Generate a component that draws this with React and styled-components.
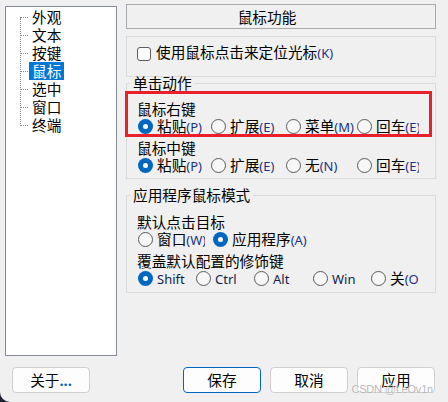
import React from 'react';
import styled, { createGlobalStyle } from 'styled-components';

const GlobalStyle = createGlobalStyle`
  html, body {
    margin: 0;
    padding: 0;
    background: #1f2330;
  }
  body {
    font-family: "Noto Sans", "Noto Sans CJK SC", sans-serif;
  }
`;

const cjk = `"Noto Sans CJK SC", "Noto Sans", sans-serif`;
const latin = `"Noto Sans", "Open Sans", sans-serif`;

const Window = styled.div`
  position: relative;
  width: 448px;
  height: 402px;
  box-sizing: border-box;
  background: #f0f0f0;
  border-bottom-left-radius: 10px;
  display: flex;
  flex-direction: column;
  overflow: hidden;
  color: #000;
  font-family: ${cjk};
  font-size: 11pt;
`;

const Main = styled.div`
  display: flex;
  gap: 9px;
  padding: 4px 12px 0 5px;
`;

const Tree = styled.div`
  width: 112px;
  height: 350px;
  margin-top: 2px;
  box-sizing: border-box;
  border: 1px solid #868b98;
  background: #fff;
  padding-top: 1px;
`;

const TreeList = styled.ul`
  position: relative;
  list-style: none;
  margin: 0;
  padding: 0 0 0 23px;

  &::before {
    content: "";
    position: absolute;
    left: 14px;
    top: 10px;
    bottom: 8px;
    border-left: 1px dotted #8c8c8c;
  }
`;

const TreeItem = styled.li`
  position: relative;
  height: 18px;
  line-height: 18px;

  &::before {
    content: "";
    position: absolute;
    left: -9px;
    top: 9px;
    width: 8px;
    border-top: 1px dotted #8c8c8c;
  }
`;

const TreeLabel = styled.span`
  display: inline-block;
  padding: 0 3px;
  background: ${p => (p.$active ? '#0078d7' : 'transparent')};
  color: ${p => (p.$active ? '#fff' : '#000')};
`;

const Panel = styled.div`
  width: 310px;
  display: flex;
  flex-direction: column;
`;

const Header = styled.div`
  height: 25px;
  box-sizing: border-box;
  border: 1px solid #a9a9a9;
  line-height: 23px;
  text-align: center;
  padding-right: 28px;
`;

const CheckBox = styled.div`
  margin-top: 7px;
  height: 41px;
  box-sizing: border-box;
  border: 1px solid #dadada;
  padding: 6px 10px 0;
`;

const Line = styled.label`
  display: flex;
  align-items: flex-start;
  gap: 5px;
  line-height: 18px;
  white-space: nowrap;
`;

const Box = styled.span`
  width: 14px;
  height: 14px;
  margin-top: 4px;
  box-sizing: border-box;
  border: 1px solid #5d5d5d;
  border-radius: 3px;
  background: #fbfbfb;
  flex: none;
`;

const Key = styled.span`
  font-family: ${latin};
  font-size: 13px;
  color: #1a3384;
`;

const Group = styled.fieldset`
  position: relative;
  margin: ${p => p.$mt}px 0 0;
  min-width: 0;
  border: 1px solid #dadada;
  padding: ${p => p.$pt}px 0 ${p => p.$pb}px 10px;

  & > div + div {
    margin-top: ${p => p.$gap}px;
  }
`;

const Legend = styled.legend`
  margin-left: -7px;
  padding: 0 3px;
  line-height: 16px;
`;

const Block = styled.div`
  position: relative;
`;

const Marked = styled(Block)`
  &::after {
    content: "";
    position: absolute;
    left: -12px;
    top: -7px;
    width: 307px;
    height: 46px;
    box-sizing: border-box;
    border: 3px solid #e8202a;
    pointer-events: none;
  }
`;

const Caption = styled.div`
  height: 16px;
  padding-top: 2px;
  line-height: 18px;
`;

const Row = styled.div`
  display: grid;
  grid-template-columns: ${p => p.$cols};
  width: 282px;
  height: 20px;
  overflow: hidden;
`;

const Option = styled.label`
  display: flex;
  align-items: center;
  gap: 4px;
  overflow: hidden;
  white-space: nowrap;
  line-height: 20px;
  width: ${p => (p.$w ? `${p.$w}px` : 'auto')};
`;

const Radio = styled.span`
  position: relative;
  flex: none;
  width: 15px;
  height: 15px;
  margin-left: 1px;
  box-sizing: border-box;
  border-radius: 50%;
  border: ${p => (p.$on ? 'none' : '1px solid #5a5a5a')};
  background: ${p => (p.$on ? '#0067c0' : '#f7f7f7')};

  &::after {
    content: "";
    display: ${p => (p.$on ? 'block' : 'none')};
    position: absolute;
    left: 5px;
    top: 5px;
    width: 5px;
    height: 5px;
    border-radius: 50%;
    background: #fff;
  }
`;

const Latin = styled.span`
  font-family: ${latin};
  font-size: 13px;
  color: #0f1f4f;
`;

const Footer = styled.div`
  display: flex;
  padding: 11px 13px 0 12px;
`;

const Buttons = styled.div`
  display: flex;
  gap: 9px;
  margin-left: auto;
`;

const Button = styled.button`
  width: 78px;
  height: 26px;
  box-sizing: border-box;
  border: 1px solid ${p => (p.$primary ? '#0067c0' : '#d0d0d0')};
  border-radius: 4px;
  background: #fdfdfd;
  font-family: ${cjk};
  font-size: 11pt;
  color: #000;
  padding: 0;
  line-height: 22px;
`;

const Dots = styled.span`
  font-family: ${latin};
  color: #0067c0;
  font-weight: bold;
`;

const Watermark = styled.div`
  position: absolute;
  right: 15px;
  bottom: 7px;
  font-family: "Liberation Sans", Arial, sans-serif;
  font-size: 11px;
  letter-spacing: -0.2px;
  color: rgba(150, 150, 150, 0.7);
  text-shadow: 0 0 1px #fff;
  pointer-events: none;
`;

const items = ['外观', '文本', '按键', '鼠标', '选中', '窗口', '终端'];

const rightKey = [
  { t: '粘贴', k: '(P)', on: true },
  { t: '扩展', k: '(E)' },
  { t: '菜单', k: '(M)' },
  { t: '回车', k: '(E)' },
];
const middleKey = [
  { t: '粘贴', k: '(P)', on: true },
  { t: '扩展', k: '(E)' },
  { t: '无', k: '(N)' },
  { t: '回车', k: '(E)' },
];
const target = [
  { t: '窗口', k: '(W)', w: 68 },
  { t: '应用程序', k: '(A)', on: true },
];
const modifiers = [
  { l: 'Shift', on: true },
  { l: 'Ctrl' },
  { l: 'Alt' },
  { l: 'Win' },
  { t: '关', k: '(O)' },
];

const Options = ({ cols, list }) => (
  <Row $cols={cols}>
    {list.map((o, i) => (
      <Option key={i} $w={o.w}>
        <Radio $on={o.on} />
        <span>
          {o.t}
          {o.k && <Key>{o.k}</Key>}
          {o.l && <Latin>{o.l}</Latin>}
        </span>
      </Option>
    ))}
  </Row>
);

export default function App() {
  return (
    <>
      <GlobalStyle />
      <Window>
        <Main>
          <Tree>
            <TreeList>
              {items.map(it => (
                <TreeItem key={it}>
                  <TreeLabel $active={it === '鼠标'}>{it}</TreeLabel>
                </TreeItem>
              ))}
            </TreeList>
          </Tree>
          <Panel>
            <Header>鼠标功能</Header>
            <CheckBox>
              <Line>
                <Box />
                <span>
                  使用鼠标点击来定位光标<Key>(K)</Key>
                </span>
              </Line>
            </CheckBox>
            <Group $mt={-2} $pt={7} $pb={3} $gap={1}>
              <Legend>单击动作</Legend>
              <Marked>
                <Caption>鼠标右键</Caption>
                <Options cols="73px 75px 71px 1fr" list={rightKey} />
              </Marked>
              <Block>
                <Caption>鼠标中键</Caption>
                <Options cols="73px 75px 71px 1fr" list={middleKey} />
              </Block>
            </Group>
            <Group $mt={8} $pt={8} $pb={4} $gap={1}>
              <Legend>应用程序鼠标模式</Legend>
              <Block>
                <Caption>默认点击目标</Caption>
                <Options cols="75px 1fr" list={target} />
              </Block>
              <Block>
                <Caption>覆盖默认配置的修饰键</Caption>
                <Options cols="58px 58px 59px 58px 1fr" list={modifiers} />
              </Block>
            </Group>
          </Panel>
        </Main>
        <Footer>
          <Button>
            关于<Dots>...</Dots>
          </Button>
          <Buttons>
            <Button $primary>保存</Button>
            <Button>取消</Button>
            <Button>应用</Button>
          </Buttons>
        </Footer>
        <Watermark>CSDN @LeOv1n</Watermark>
      </Window>
    </>
  );
}
